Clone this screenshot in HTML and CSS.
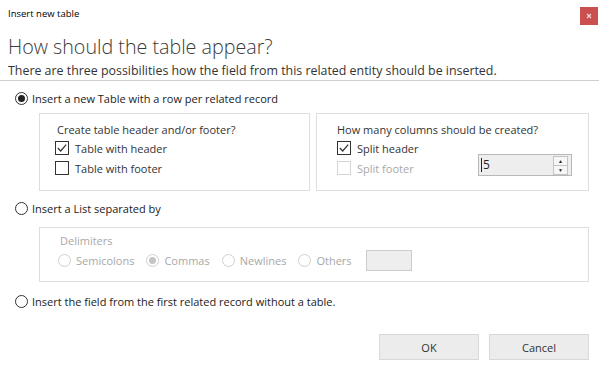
FILE: index.html
```html
<!DOCTYPE html>
<html lang="en">
<head>
    <meta charset="UTF-8">
    <title>Insert new table</title>
    <link rel="stylesheet" href="styles.css">
</head>
<body>
    <div class="dialog">
        <div class="titlebar">
            <span class="title">Insert new table</span>
            <svg class="close-btn" viewBox="0 0 18 18" width="18" height="18">
                <rect width="18" height="18" fill="#c9504f"/>
                <path d="M7 7 L11 11 M11 7 L7 11" stroke="#f6e0e0" stroke-width="1.1"/>
            </svg>
        </div>
        <h1 class="heading">How should the table appear?</h1>
        <p class="subtitle">There are three possibilities how the field from this related entity should be inserted.</p>
        <div class="divider"></div>

        <label class="option option-table">
            <span class="radio checked"></span>
            <span>Insert a new Table with a row per related record</span>
        </label>
        <div class="groups">
            <div class="box box-left">
                <div class="box-label">Create table header and/or footer?</div>
                <label class="check-row">
                    <span class="checkbox checked">
                        <svg viewBox="0 0 14 14" width="14" height="14"><path d="M2.8 7 L5.7 10 L11.2 3.6" fill="none" stroke="#333" stroke-width="1.2"/></svg>
                    </span>
                    <span>Table with header</span>
                </label>
                <label class="check-row">
                    <span class="checkbox"></span>
                    <span>Table with footer</span>
                </label>
            </div>
            <div class="box box-right">
                <div class="box-label">How many columns should be created?</div>
                <div class="split">
                    <div>
                        <label class="check-row">
                            <span class="checkbox checked">
                                <svg viewBox="0 0 14 14" width="14" height="14"><path d="M2.8 7 L5.7 10 L11.2 3.6" fill="none" stroke="#333" stroke-width="1.2"/></svg>
                            </span>
                            <span>Split header</span>
                        </label>
                        <label class="check-row disabled">
                            <span class="checkbox"></span>
                            <span>Split footer</span>
                        </label>
                    </div>
                    <div class="spinner">
                        <span class="spinner-value">5</span>
                        <span class="spinner-arrows">
                            <span class="arrow">&#9650;</span>
                            <span class="arrow">&#9660;</span>
                        </span>
                    </div>
                </div>
            </div>
        </div>

        <label class="option option-list">
            <span class="radio"></span>
            <span>Insert a List separated by</span>
        </label>
        <div class="box box-delims">
            <div class="box-label disabled">Delimiters</div>
            <div class="delims disabled">
                <label class="delim"><span class="radio"></span>Semicolons</label>
                <label class="delim"><span class="radio checked"></span>Commas</label>
                <label class="delim"><span class="radio"></span>Newlines</label>
                <label class="delim"><span class="radio"></span>Others</label>
                <span class="others-input"></span>
            </div>
        </div>

        <label class="option option-field">
            <span class="radio"></span>
            <span>Insert the field from the first related record without a table.</span>
        </label>

        <div class="buttons">
            <button class="btn">OK</button>
            <button class="btn">Cancel</button>
        </div>
    </div>
</body>
</html>
```

FILE: styles.css
```css
body {
    margin: 0;
    background: #ffffff;
    font-family: "Open Sans", "Noto Sans", sans-serif;
    font-size: 11px;
    color: #222;
}

.dialog {
    width: 605px;
    height: 373px;
}

.titlebar {
    height: 28px;
    display: flex;
    justify-content: space-between;
    align-items: flex-start;
    padding: 0 7px 0 8px;
}

.title {
    line-height: 28px;
    font-size: 9.5px;
    color: #000;
}

.close-btn {
    display: block;
    margin-top: 7px;
    flex: none;
}

.heading {
    margin: 6px 8px 0;
    font-size: 19.7px;
    line-height: 26px;
    font-weight: 300;
    color: #3a3a3a;
}

.subtitle {
    margin: 3px 8px 0;
    font-size: 12.4px;
    line-height: 16px;
    color: #333;
}

.divider {
    margin-top: 1px;
    width: 599px;
    height: 1px;
    background: #cfcfcf;
}

.option {
    display: flex;
    align-items: center;
    gap: 4px;
    height: 18px;
    margin-left: 15px;
}

.option-table {
    margin-top: 8px;
}

.radio {
    display: inline-block;
    box-sizing: border-box;
    width: 13px;
    height: 13px;
    border: 1px solid #333;
    border-radius: 50%;
    position: relative;
    flex-shrink: 0;
}

.radio.checked::after {
    content: "";
    position: absolute;
    left: 2px;
    top: 2px;
    width: 7px;
    height: 7px;
    border-radius: 50%;
    background: #222;
}

.groups {
    display: flex;
    gap: 6px;
    margin: 6px 0 0 39px;
}

.box {
    box-sizing: border-box;
    border: 1px solid #dedede;
    height: 78px;
}

.box-left {
    width: 271px;
    padding: 8px 0 0 15px;
}

.box-right {
    width: 273px;
    padding: 8px 16px 0 20px;
}

.box-label {
    line-height: 16px;
    margin-left: 2px;
    color: #333;
}

.box-right .box-label {
    margin-left: 0;
}

.check-row {
    display: flex;
    align-items: center;
    gap: 6px;
    height: 20px;
    color: #333;
}

.checkbox {
    box-sizing: border-box;
    width: 14px;
    height: 14px;
    border: 1px solid #333;
    display: inline-block;
    flex-shrink: 0;
}

.checkbox svg {
    display: block;
    margin: -1px 0 0 -1px;
}

.disabled,
.check-row.disabled {
    color: #a8a8a8;
}

.check-row.disabled .checkbox {
    border-color: #d4d4d4;
}

.split {
    display: flex;
    justify-content: space-between;
}

.spinner {
    box-sizing: border-box;
    margin-top: 16px;
    width: 94px;
    height: 22px;
    border: 1px solid #b8b8b8;
    background: #eeeeee;
    display: flex;
    justify-content: space-between;
    align-items: center;
    padding: 0 3px 0 2px;
}

.spinner-value {
    border-left: 1px solid #222;
    padding-left: 1px;
    line-height: 14px;
    font-size: 12px;
}

.spinner-arrows {
    display: flex;
    flex-direction: column;
    border: 1px solid #c4c4c4;
    background: #f6f6f6;
}

.arrow {
    font-size: 5px;
    line-height: 8px;
    width: 13px;
    text-align: center;
    color: #222;
}

.arrow + .arrow {
    border-top: 1px solid #c4c4c4;
}

.option-list {
    margin-top: 8px;
}

.box-delims {
    width: 550px;
    height: 55px;
    margin: 10px 0 0 39px;
    padding: 5px 0 0 18px;
}

.delims {
    display: flex;
    align-items: center;
    height: 22px;
}

.delim {
    display: flex;
    align-items: center;
    gap: 5px;
    margin-right: 12px;
    font-size: 11px;
}

.delims .radio {
    border-color: #cfcfcf;
}

.delims .radio.checked::after {
    background: #c4c4c4;
}

.others-input {
    box-sizing: border-box;
    width: 46px;
    height: 21px;
    border: 1px solid #cccccc;
    background: #eeeeee;
    margin-left: 2px;
}

.option-field {
    margin-top: 10px;
}

.buttons {
    display: flex;
    justify-content: flex-end;
    gap: 10px;
    margin: 24px 16px 0 0;
}

.btn {
    width: 100px;
    height: 26px;
    border: 1px solid #d8d8d8;
    background: #ececec;
    font-family: inherit;
    font-size: 11px;
    color: #333;
}
```
